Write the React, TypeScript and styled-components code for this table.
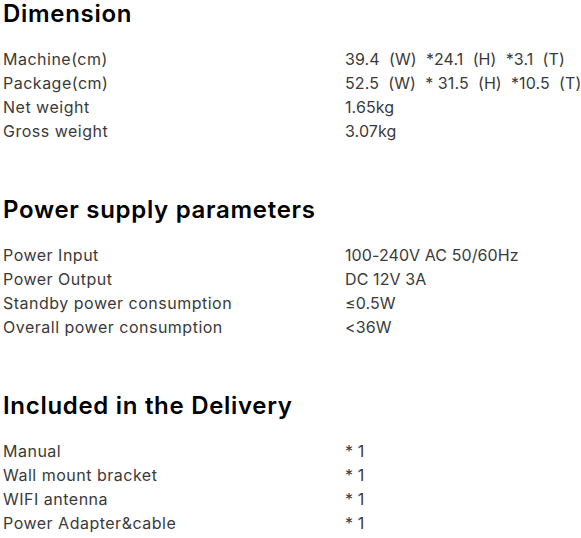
import React from 'react'
import styled, { createGlobalStyle } from 'styled-components'

const GlobalStyle = createGlobalStyle`
  body {
    margin: 0;
    background: #fff;
    font-family: Inter, "Open Sans", sans-serif;
  }
`

const Page = styled.div`
  padding: 0 0 0 3px;
  margin-top: -6px;
`

const Section = styled.section`
  margin-bottom: 47px;

  &:last-child {
    margin-bottom: 0;
  }
`

const Title = styled.h2`
  margin: 0 0 13px;
  font-size: 24px;
  line-height: 40px;
  font-weight: 600;
  letter-spacing: 0.7px;
  color: #000;
`

const Table = styled.div`
  display: grid;
  grid-template-columns: 342px 1fr;
`

const Cell = styled.div<{ $value?: boolean }>`
  font-size: 16px;
  line-height: 24px;
  letter-spacing: ${(p) => (p.$value ? '0.1px' : '0.5px')};
  color: #3a3a3a;
  white-space: pre;
`

const sections = [
  {
    title: 'Dimension',
    rows: [
      ['Machine(cm)', '39.4  (W)  *24.1  (H)  *3.1  (T)'],
      ['Package(cm)', '52.5  (W)  * 31.5  (H)  *10.5  (T)'],
      ['Net weight', '1.65kg'],
      ['Gross weight', '3.07kg'],
    ],
  },
  {
    title: 'Power supply parameters',
    rows: [
      ['Power Input', '100-240V AC 50/60Hz'],
      ['Power Output', 'DC 12V 3A'],
      ['Standby power consumption', '≤0.5W'],
      ['Overall power consumption', '<36W'],
    ],
  },
  {
    title: 'Included in the Delivery',
    rows: [
      ['Manual', '* 1'],
      ['Wall mount bracket', '* 1'],
      ['WIFI antenna', '* 1'],
      ['Power Adapter&cable', '* 1'],
    ],
  },
]

export default function App() {
  return (
    <>
      <GlobalStyle />
      <Page>
        {sections.map((s) => (
          <Section key={s.title}>
            <Title>{s.title}</Title>
            <Table>
              {s.rows.map(([k, v]) => (
                <React.Fragment key={k}>
                  <Cell>{k}</Cell>
                  <Cell $value>{v}</Cell>
                </React.Fragment>
              ))}
            </Table>
          </Section>
        ))}
      </Page>
    </>
  )
}
